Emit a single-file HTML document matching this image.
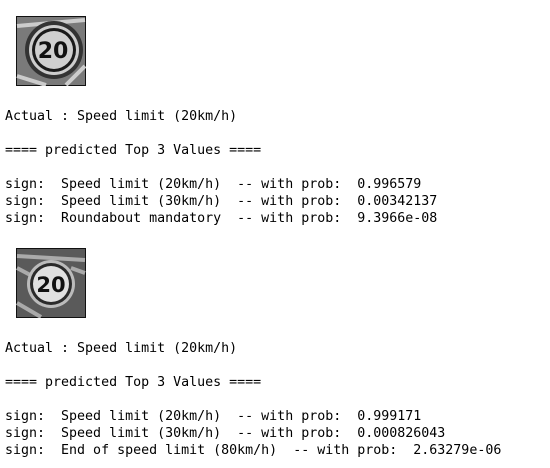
<!DOCTYPE html>
<html><head><style>
body{margin:0;background:#fff;width:550px;height:468px;overflow:hidden;position:relative}
pre{position:absolute;left:5px;margin:0;font-family:"DejaVu Sans Mono","Liberation Mono",monospace;font-size:13.3px;line-height:17px;color:#000}
svg{position:absolute;left:16px}
</style></head><body>
<svg width="70" height="70" style="top:16px" viewBox="0 0 70 70">
<rect x="0.5" y="0.5" width="69" height="69" fill="#7a7a7a" stroke="#111"/>
<path d="M1 10 L69 4 M1 60 L30 69 M50 69 L69 50" stroke="#ccc" stroke-width="4"/>
<circle cx="38" cy="34" r="29" fill="#333"/>
<circle cx="38" cy="34" r="25" fill="#ccc"/>
<circle cx="38" cy="34" r="22" fill="#1a1a1a"/>
<circle cx="38" cy="34" r="19" fill="#cfcfcf"/>
<text x="37" y="42" font-family="DejaVu Sans" font-weight="bold" font-size="22" text-anchor="middle" fill="#111">20</text>
</svg>
<svg width="70" height="70" style="top:248px" viewBox="0 0 70 70">
<rect x="0.5" y="0.5" width="69" height="69" fill="#5a5a5a" stroke="#111"/>
<path d="M1 8 L69 12 M1 20 L20 30 M55 20 L69 25 M1 55 L25 69" stroke="#aaa" stroke-width="4"/>
<circle cx="35" cy="36" r="24" fill="#bbb"/>
<circle cx="35" cy="36" r="21" fill="#2a2a2a"/>
<circle cx="35" cy="36" r="18" fill="#e0e0e0"/>
<text x="35" y="44" font-family="DejaVu Sans" font-weight="bold" font-size="21" text-anchor="middle" fill="#111">20</text>
</svg>
<pre style="top:108px">Actual : Speed limit (20km/h)

==== predicted Top 3 Values ====

sign:  Speed limit (20km/h)  -- with prob:  0.996579
sign:  Speed limit (30km/h)  -- with prob:  0.00342137
sign:  Roundabout mandatory  -- with prob:  9.3966e-08</pre>
<pre style="top:340px">Actual : Speed limit (20km/h)

==== predicted Top 3 Values ====

sign:  Speed limit (20km/h)  -- with prob:  0.999171
sign:  Speed limit (30km/h)  -- with prob:  0.000826043
sign:  End of speed limit (80km/h)  -- with prob:  2.63279e-06</pre>
</body></html>
